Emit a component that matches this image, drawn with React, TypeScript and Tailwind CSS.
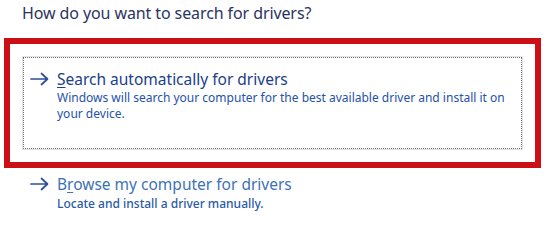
import React from "react";

function Arrow({ color }: { color: string }) {
  return (
    <svg width="19" height="14" viewBox="0 0 19 14" fill="none" className="shrink-0">
      <path d="M1 7H17.5M11.5 1.5L17.5 7L11.5 12.5" stroke={color} strokeWidth="1.7" strokeLinecap="round" strokeLinejoin="round" />
    </svg>
  );
}

export default function App() {
  const font = { fontFamily: '"Noto Sans", "Open Sans", sans-serif' };
  return (
    <div className="w-[550px] h-[223px] bg-white overflow-hidden flex flex-col" style={font}>
      <div className="pl-[22px] pt-[2px] h-[38px] text-[16px] leading-[22px] text-[#2a3461] tracking-[-0.1px]">
        How do you want to search for drivers?
      </div>
      <div className="ml-[4px] w-[537px] h-[130px] shrink-0 border-[6px] border-[#cc0e16] p-[12px]">
        <div className="border border-[#e4e4e4] h-full">
          <div className="border border-dotted border-[#707070] h-full pl-[6px] pt-[11px]">
            <div className="flex items-center gap-[8px]">
              <Arrow color="#2d4d98" />
              <div className="text-[15.5px] leading-[20px] text-[#203e8c]">
                <span className="underline underline-offset-2">S</span>earch automatically for drivers
              </div>
            </div>
            <div className="pl-[27px] mt-[1px] text-[12px] leading-[16px] text-[#2451ad] pr-[4px]">
              Windows will search your computer for the best available driver and install it on your device.
            </div>
          </div>
        </div>
      </div>
      <div className="pl-[30px] pt-[6px]">
        <div className="flex items-center gap-[8px]">
          <Arrow color="#2d4f9b" />
          <div className="text-[15.5px] leading-[20px] text-[#3d72b6]">
            B<span className="underline underline-offset-2">r</span>owse my computer for drivers
          </div>
        </div>
        <div className="pl-[27px] mt-[2px] text-[12px] leading-[16px] text-[#2a5aa7] font-medium">
          Locate and install a driver manually.
        </div>
      </div>
    </div>
  );
}
